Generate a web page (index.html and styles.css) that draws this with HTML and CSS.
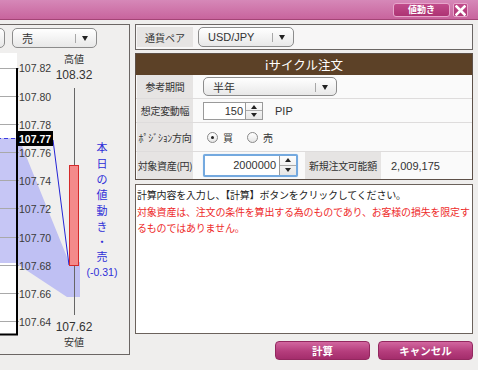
FILE: index.html
```html
<!DOCTYPE html>
<html lang="ja">
<head>
<meta charset="utf-8">
<title>iサイクル注文</title>
<link rel="stylesheet" href="styles.css">
</head>
<body>
<div class="titlebar">
  <button class="tb-btn">値動き</button>
  <button class="tb-close"><svg width="11" height="11" viewBox="0 0 11 11"><path d="M1.5 1.5 L9.5 9.5 M9.5 1.5 L1.5 9.5" stroke="#fff" stroke-width="2.6" stroke-linecap="square"/></svg></button>
</div>
<div class="main">
  <div class="left">
    <div class="sel-row">
      <div class="sel sel-partial"><span class="sel-text"></span><span class="sel-arrow"></span></div>
      <div class="sel sel-side"><span class="sel-text">売</span><span class="sel-arrow"></span></div>
    </div>
    <svg class="chart" width="188" height="304" viewBox="-59 50 188 304">
      <rect x="-59" y="53" width="76" height="282" fill="#ffffff"/>
      <rect x="-59" y="138" width="76" height="125" fill="#c6c6f5"/>
      <polygon points="17,141 20,141 69,262 80,262 80,297 67,297 17,264" fill="#bfc0f3"/>
      <g stroke="#a9a9a9" stroke-width="1">
        <line x1="-59" y1="68.5" x2="19" y2="68.5"/>
        <line x1="-59" y1="96.5" x2="19" y2="96.5"/>
        <line x1="-59" y1="124.5" x2="19" y2="124.5"/>
        <line x1="-59" y1="152.5" x2="19" y2="152.5"/>
        <line x1="-59" y1="180.5" x2="19" y2="180.5"/>
        <line x1="-59" y1="208.5" x2="19" y2="208.5"/>
        <line x1="-59" y1="237.5" x2="19" y2="237.5"/>
        <line x1="-59" y1="265.5" x2="19" y2="265.5"/>
        <line x1="-59" y1="293.5" x2="19" y2="293.5"/>
        <line x1="-59" y1="321.5" x2="19" y2="321.5"/>
      </g>
      <line x1="-59" y1="138.5" x2="17" y2="138.5" stroke="#3a3ae0" stroke-width="1" stroke-dasharray="4 3"/>
      <line x1="17" y1="68" x2="17" y2="335" stroke="#000" stroke-width="2"/>
      <line x1="-59" y1="334.5" x2="18" y2="334.5" stroke="#000" stroke-width="2"/>
      <line x1="53" y1="140" x2="69" y2="265" stroke="#2424d6" stroke-width="1"/>
      <line x1="74.5" y1="88" x2="74.5" y2="315" stroke="#666" stroke-width="1"/>
      <rect x="69.5" y="165.5" width="9" height="100" fill="#f48a8a" stroke="#d42a2a" stroke-width="1"/>
      <g class="ax">
        <text x="19" y="72">107.82</text>
        <text x="19" y="100.5">107.80</text>
        <text x="19" y="128.5">107.78</text>
        <text x="19" y="156.5">107.76</text>
        <text x="19" y="184.5">107.74</text>
        <text x="19" y="212.5">107.72</text>
        <text x="19" y="241.5">107.70</text>
        <text x="19" y="269.5">107.68</text>
        <text x="19" y="297.5">107.66</text>
        <text x="19" y="325.5">107.64</text>
      </g>
      <rect x="17" y="131" width="36" height="15" fill="#000"/>
      <text class="cur" x="19" y="142.5">107.77</text>
      <text class="hl-j" x="74" y="63">高値</text>
      <text class="hl-n" x="74" y="78.5">108.32</text>
      <text class="hl-n" x="74" y="330.5">107.62</text>
      <text class="hl-j" x="74" y="346">安値</text>
      <g class="vt">
        <text x="102" y="152">本</text>
        <text x="102" y="168">日</text>
        <text x="102" y="184">の</text>
        <text x="102" y="199">値</text>
        <text x="102" y="215">動</text>
        <text x="102" y="231">き</text>
        <text x="102" y="246">・</text>
        <text x="102" y="261">売</text>
        <text class="vt-n" x="102" y="276">(-0.31)</text>
      </g>
    </svg>
  </div>
  <div class="right">
    <div class="pairbox">
      <div class="lbl pair-lbl">通貨ペア</div>
      <div class="sel sel-pair"><span class="sel-text">USD/JPY</span><span class="sel-arrow"></span></div>
    </div>
    <div class="panel">
      <div class="panel-head">iサイクル注文</div>
      <div class="row row1">
        <div class="lbl">参考期間</div>
        <div class="cell"><div class="sel sel-period"><span class="sel-text">半年</span><span class="sel-arrow"></span></div></div>
      </div>
      <div class="row row2">
        <div class="lbl">想定変動幅</div>
        <div class="cell">
          <div class="num num-pip"><span class="num-val">150</span><span class="spin"><span class="up"></span><span class="dn"></span></span></div>
          <span class="unit">PIP</span>
        </div>
      </div>
      <div class="row row3">
        <div class="lbl lbl-half">ﾎﾟｼﾞｼｮﾝ方向</div>
        <div class="cell">
          <span class="radio on"></span><span class="rtext">買</span>
          <span class="radio"></span><span class="rtext">売</span>
        </div>
      </div>
      <div class="row row4">
        <div class="lbl">対象資産(円)</div>
        <div class="cell">
          <div class="num num-asset"><span class="num-val">2000000</span><span class="spin"><span class="up"></span><span class="dn"></span></span></div>
          <div class="lbl lbl-avail">新規注文可能額</div>
          <span class="avail">2,009,175</span>
        </div>
      </div>
    </div>
    <div class="msg">
      <p class="msg-black">計算内容を入力し、【計算】ボタンをクリックしてください。</p>
      <p class="msg-red">対象資産は、注文の条件を算出する為のものであり、お客様の損失を限定するものではありません。</p>
    </div>
    <div class="btns">
      <button class="pbtn">計算</button>
      <button class="pbtn">キャンセル</button>
    </div>
  </div>
</div>
</body>
</html>
```

FILE: styles.css
```css
* { box-sizing: border-box; }
html, body { margin: 0; padding: 0; }
body {
  width: 478px;
  height: 370px;
  overflow: hidden;
  background: #efeeed;
  font-family: "Noto Sans CJK JP", "Liberation Sans", sans-serif;
  color: #333;
}
button { font-family: inherit; padding: 0; margin: 0; cursor: default; }

.titlebar {
  height: 20px;
  background: linear-gradient(#d688b8, #c8649d);
  border-bottom: 1px solid #a44476;
  display: flex;
  justify-content: flex-end;
  align-items: flex-start;
  padding: 3px 10px 0 0;
  gap: 3px;
}
.tb-btn {
  width: 57px;
  height: 14px;
  border: 1px solid #e7a6cb;
  border-radius: 3px;
  background: linear-gradient(#c14b8b, #ad3373);
  color: #fff;
  font-size: 9px;
  font-weight: bold;
  line-height: 12px;
}
.tb-close {
  width: 15px;
  height: 14px;
  border: 1px solid #e7a6cb;
  border-radius: 2px;
  background: linear-gradient(#c14b8b, #ad3373);
  display: flex;
  align-items: center;
  justify-content: center;
}
.tb-close svg { display: block; }

.main {
  display: flex;
  gap: 5px;
  padding-top: 4px;
}

/* left chart panel */
.left {
  margin-left: -60px;
  width: 190px;
  height: 331px;
  flex: none;
  border: 1px solid #6b6664;
  background: #f0efee;
  padding-top: 3px;
  overflow: hidden;
}
.sel-row {
  display: flex;
  gap: 7px;
  padding-left: 9px;
  height: 20px;
  margin-bottom: 2px;
}
.chart { display: block; }
.chart .ax text {
  font-family: "Liberation Sans", sans-serif;
  font-size: 10.5px;
  fill: #3a3a3a;
}
.chart .cur {
  font-family: "Liberation Sans", sans-serif;
  font-size: 10.5px;
  font-weight: bold;
  fill: #fff;
}
.chart .hl-j {
  font-family: "Noto Sans CJK JP", sans-serif;
  font-size: 10px;
  fill: #333;
  text-anchor: middle;
}
.chart .hl-n {
  font-family: "Liberation Sans", sans-serif;
  font-size: 12px;
  fill: #333;
  text-anchor: middle;
}
.chart .vt text {
  font-family: "Noto Sans CJK JP", sans-serif;
  font-size: 11px;
  fill: #2e2ed8;
  text-anchor: middle;
}
.chart .vt .vt-n {
  font-family: "Liberation Sans", sans-serif;
  font-size: 10.5px;
}

/* select */
.sel {
  display: flex;
  align-items: center;
  height: 20px;
  border: 1px solid #8c8c8c;
  border-radius: 5px;
  background: linear-gradient(#ffffff, #e8e8e8);
  font-size: 11px;
  color: #333;
}
.sel-text {
  flex: 1;
  padding-left: 9px;
  font-family: "Liberation Sans", "Noto Sans CJK JP", sans-serif;
  white-space: nowrap;
}
.sel-arrow {
  width: 21px;
  height: 100%;
  position: relative;
}
.sel-arrow::before {
  content: "";
  position: absolute;
  left: 0;
  top: 5px;
  width: 1px;
  height: 9px;
  background: #a8a8a8;
}
.sel-arrow::after {
  content: "";
  position: absolute;
  left: 7px;
  top: 7px;
  border-left: 3px solid transparent;
  border-right: 3px solid transparent;
  border-top: 5px solid #222;
}
.sel-partial { width: 55px; }
.sel-side { width: 85px; }
.sel-pair { width: 96px; height: 20px; }
.sel-period { width: 134px; height: 19px; }

/* right side */
.right {
  width: 338px;
  flex: none;
  display: flex;
  flex-direction: column;
}
.pairbox {
  height: 26px;
  border: 1px solid #6b6664;
  background: #f7f6f6;
  display: flex;
  align-items: center;
  padding: 2px 1px;
  gap: 5px;
}
.lbl {
  background: #e6e4e3;
  font-size: 10px;
  color: #333;
  display: flex;
  align-items: center;
  justify-content: center;
  white-space: nowrap;
}
.pair-lbl {
  width: 56px;
  height: 100%;
}
.panel {
  margin-top: 3px;
  height: 127px;
  border: 1px solid #5d5048;
  background: #fafafa;
}
.panel-head {
  height: 21px;
  background: #5c4127;
  color: #fff;
  font-size: 12.5px;
  text-align: center;
  line-height: 21px;
}
.row {
  display: flex;
  border-top: 1px solid #dedcdc;
  padding: 0 1px;
}
.row1 { height: 23px; border-top: none; }
.row2 { height: 24px; }
.row3 { height: 29px; }
.row4 { height: 28px; }
.row > .lbl {
  width: 56px;
  flex: none;
  letter-spacing: -0.3px;
}
.lbl-half { font-size: 10px; letter-spacing: -0.6px; }
.cell {
  flex: 1;
  display: flex;
  align-items: center;
  padding-left: 10px;
}
.num {
  display: flex;
  height: 18px;
  border: 1px solid #9a9a9a;
  background: #fff;
  font-family: "Liberation Sans", sans-serif;
  font-size: 11px;
  color: #333;
}
.num-val {
  flex: 1;
  text-align: right;
  padding-right: 2px;
  line-height: 16px;
}
.spin {
  width: 17px;
  display: flex;
  flex-direction: column;
  border-left: 1px solid #9a9a9a;
  background: linear-gradient(#fdfdfd, #e6e6e6);
}
.spin .up, .spin .dn {
  flex: 1;
  position: relative;
}
.spin .up { border-bottom: 1px solid #aaa; }
.spin .up::after, .spin .dn::after {
  content: "";
  position: absolute;
  left: 5px;
  border-left: 3px solid transparent;
  border-right: 3px solid transparent;
}
.spin .up::after { top: 2px; border-bottom: 4px solid #222; }
.spin .dn::after { top: 2px; border-top: 4px solid #222; }
.num-pip { width: 60px; }
.unit {
  margin-left: 12px;
  font-family: "Liberation Sans", sans-serif;
  font-size: 11px;
  color: #333;
}
.radio {
  width: 11px;
  height: 11px;
  border: 1px solid #8a8a8a;
  border-radius: 50%;
  background: linear-gradient(#ffffff, #e6e6e6);
  margin-left: 4px;
  position: relative;
}
.radio.on::after {
  content: "";
  position: absolute;
  left: 3px;
  top: 3px;
  width: 3px;
  height: 3px;
  border-radius: 50%;
  background: #222;
}
.rtext {
  font-size: 10px;
  margin-left: 5px;
  margin-right: 10px;
  color: #333;
}
.num-asset {
  width: 95px;
  height: 23px;
  border: 2px solid #74a9df;
  border-radius: 2px;
  box-shadow: 0 0 1px #a9cdf0;
}
.num-asset .num-val { line-height: 19px; padding-right: 3px; }
.num-asset .spin { border-left: 1px solid #9a9a9a; }
.lbl-avail {
  margin-left: 7px;
  width: 76px;
  height: 100%;
  letter-spacing: -0.3px;
}
.avail {
  margin-left: 10px;
  font-family: "Liberation Sans", sans-serif;
  font-size: 11px;
  color: #333;
}

.msg {
  margin-top: 4px;
  height: 150px;
  border: 1px solid #6b625c;
  background: #fff;
  padding: 2px 2px 0 1px;
  font-size: 10px;
  line-height: 16.5px;
  letter-spacing: -0.2px;
}
.msg p { margin: 0; }
.msg-black { color: #222; }
.msg-red { color: #ee2b2b; }

.btns {
  margin-top: 7px;
  display: flex;
  justify-content: flex-end;
  gap: 8px;
}
.pbtn {
  width: 95px;
  height: 19px;
  border: 1px solid #93285f;
  border-radius: 4px;
  background: linear-gradient(#d2669f, #b53d7c 55%, #a42d6c);
  color: #fff;
  font-size: 10.5px;
  font-weight: bold;
  line-height: 17px;
}
```
